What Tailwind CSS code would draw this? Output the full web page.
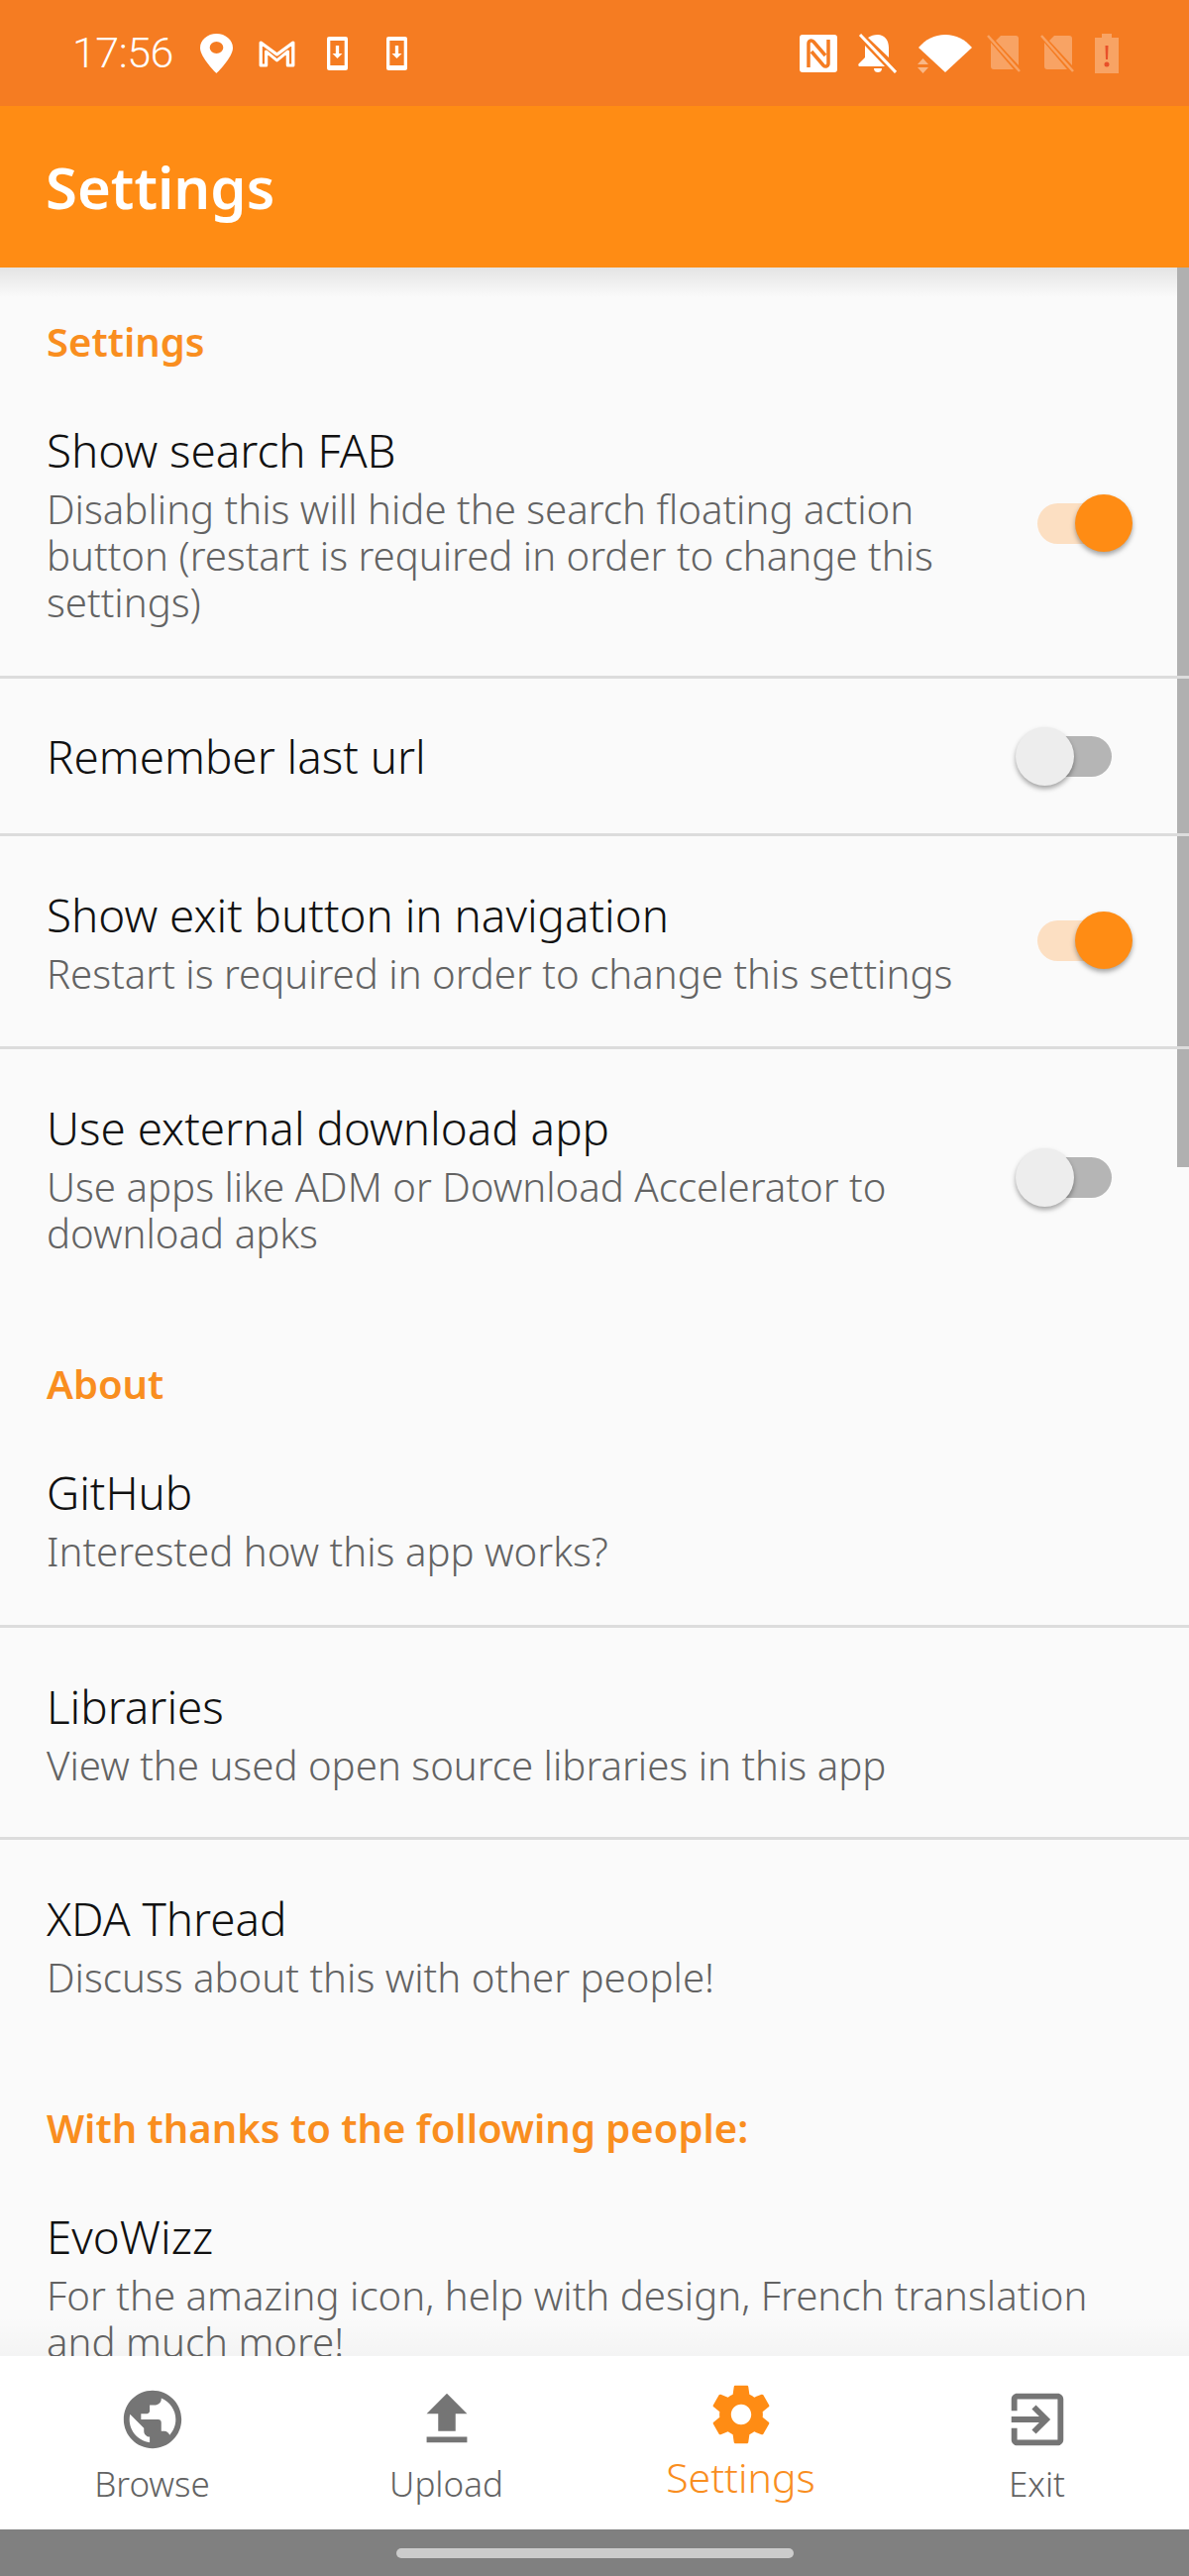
<!DOCTYPE html>
<html lang="en">
<head>
  <meta charset="UTF-8" />
  <meta name="viewport" content="width=device-width, initial-scale=1.0" />
  <title>Settings</title>
  <script src="https://cdn.jsdelivr.net/npm/@tailwindcss/browser@4"></script>
</head>
<body class="bg-[#fafafa] font-['Noto_Sans',sans-serif]">
  <div class="relative w-[1200px] h-[2600px] overflow-hidden flex flex-col">

    <!-- status bar -->
    <div class="h-[107px] shrink-0 bg-[#f57c22] flex items-center text-white pl-[73px] pr-[71px]">
      <span class="text-[43px] font-light leading-none w-[129px] tracking-[-0.5px] font-['Roboto',sans-serif]">17:56</span>
      <svg class="w-[33px] h-[40px]" viewBox="0 0 29 40" preserveAspectRatio="none"><path fill="#fff" fill-rule="evenodd" d="M14.500 0C6.500 0 0 6.300 0 14.200 0 24 14.500 40 14.500 40S29 24 29 14.200C29 6.300 22.500 0 14.500 0zm0 20a6 6 0 1 1 0-12 6 6 0 0 1 0 12z"/></svg>
      <svg class="w-[37px] h-[28px] ml-[26px]" viewBox="0 0 34 28" preserveAspectRatio="none"><path fill="none" stroke="#fff" stroke-width="3" stroke-linejoin="round" d="M2 3l15 12L32 3v23h-5V12L17 21 7 12v14H2z"/></svg>
      <svg class="w-[21px] h-[34px] ml-[32px]" viewBox="0 0 19 34" preserveAspectRatio="none"><path fill="#fff" fill-rule="evenodd" d="M2 0h15a2 2 0 0 1 2 2v30a2 2 0 0 1-2 2H2a2 2 0 0 1-2-2V2a2 2 0 0 1 2-2zm1 4v25h13V4zm5 5h3v8h3l-4.500 5-4.500-5h3z"/></svg>
      <svg class="w-[21px] h-[34px] ml-[39px]" viewBox="0 0 19 34" preserveAspectRatio="none"><path fill="#fff" fill-rule="evenodd" d="M2 0h15a2 2 0 0 1 2 2v30a2 2 0 0 1-2 2H2a2 2 0 0 1-2-2V2a2 2 0 0 1 2-2zm1 4v25h13V4zm5 5h3v8h3l-4.500 5-4.500-5h3z"/></svg>

      <div class="ml-auto flex items-center">
        <svg class="w-[38px] h-[38px]" viewBox="0 0 38 38"><rect width="38" height="38" rx="3" fill="#fff"/><path fill="none" stroke="#f57c22" stroke-width="3.500" d="M9 33V9c0-3 3-4 5-2l12 14M29 5v24c0 3-3 4-5 2L12 17"/></svg>
        <svg class="w-[39px] h-[40px] ml-[21px]" viewBox="0 0 39 40"><path fill="#fff" d="M20 1c6 0 11 5 11 13v10L10 4c3-2 6-3 10-3zM7 12l20 21H1c-1-1-1-2 0-3l6-6zM16 35h8c0 3-2 4-4 4s-4-1-4-4z"/><path stroke="#f57c22" stroke-width="5" d="M0 0l38 38"/><path stroke="#fff" stroke-width="3" d="M2 1l36 38"/></svg>
        <div class="relative w-[54px] h-[38px] ml-[22px]">
          <svg class="absolute inset-0 w-[54px] h-[38px]" viewBox="0 0 54 38"><path fill="#fff" d="M0 13C7 5 16 0 27 0s20 5 27 13L27 38z"/></svg>
          <svg class="absolute left-[-1px] top-[24px] w-[11px] h-[15px]" viewBox="0 0 11 15"><path fill="#fff" fill-opacity=".45" d="M5.500 0L11 6H0zM0 9h11l-5.500 6z"/></svg>
        </div>
        <svg class="w-[34px] h-[38px] ml-[15px]" viewBox="0 0 34 38"><path fill="#fff" fill-opacity=".3" d="M14 1h15a3 3 0 0 1 3 3v27L9 6zM4 8l23 27H7a3 3 0 0 1-3-3z"/><path stroke="#fff" stroke-opacity=".3" stroke-width="2.500" d="M1 1l32 36"/></svg>
        <svg class="w-[34px] h-[38px] ml-[20px]" viewBox="0 0 34 38"><path fill="#fff" fill-opacity=".3" d="M14 1h15a3 3 0 0 1 3 3v27L9 6zM4 8l23 27H7a3 3 0 0 1-3-3z"/><path stroke="#fff" stroke-opacity=".3" stroke-width="2.500" d="M1 1l32 36"/></svg>
        <svg class="w-[24px] h-[40px] ml-[21px]" viewBox="0 0 24 40"><path fill="#fff" fill-opacity=".3" d="M7 0h10v4h7v36H0V4h7z"/><path fill="#e8502a" d="M10.500 12h3l-.5 14h-2zM12 28.500a2.500 2.500 0 1 1 0 5 2.500 2.500 0 0 1 0-5z"/></svg>
      </div>
    </div>

    <!-- app bar -->
    <div class="h-[163px] shrink-0 bg-[#ff8c14] flex items-center pl-[46px] relative z-10">
      <h1 class="text-[58px] font-semibold text-white leading-none">Settings</h1>
    </div>

    <!-- list -->
    <div class="relative flex-1 overflow-hidden">
      <div class="absolute top-0 inset-x-0 h-[30px] bg-gradient-to-b from-[#e4e4e4] to-[#fafafa]/0"></div>
      <div class="absolute bottom-0 inset-x-0 h-[40px] bg-gradient-to-t from-black/[0.025] to-transparent"></div>
      <div class="absolute top-0 right-0 w-[12px] h-[908px] bg-[#b0b0b0]"></div>

      <p class="pt-[55px] h-[126px] pl-[47px] text-[40px] font-semibold text-[#f98e1f] leading-[40px]">Settings</p>

      <div class="h-[289px] relative pl-[47px] pt-[28px] border-b-[3px] border-[#dcdcdc]">
        <p class="text-[45.8px] font-light leading-[60px] text-[#111111]">Show search FAB</p>
        <p class="text-[40.2px] font-light leading-[47px] mt-[6px] text-[#636363] w-[920px]">Disabling this will hide the search floating action button (restart is required in order to change this settings)</p>
        <div class="absolute left-[1022px] top-[102px] w-[122px] h-[60px] flex items-center">
          <div class="absolute left-[25px] w-[75px] h-[41px] rounded-full bg-[#fcdfc2]"></div>
          <div class="absolute left-[63px] w-[58px] h-[58px] rounded-full bg-[#ff8c14] shadow-[0_3px_5px_rgba(0,0,0,0.35)]"></div>
        </div>
      </div>

      <div class="h-[159px] relative pl-[47px] flex items-center border-b-[3px] border-[#dcdcdc]">
        <p class="text-[45.8px] font-light leading-[60px] text-[#111111]">Remember last url</p>
        <div class="absolute left-[1022px] top-[48px] w-[122px] h-[60px] flex items-center">
          <div class="absolute left-[25px] w-[75px] h-[41px] rounded-full bg-[#b5b5b5]"></div>
          <div class="absolute left-[3px] w-[59px] h-[59px] rounded-full bg-[#ededed] shadow-[0_3px_5px_rgba(0,0,0,0.35)]"></div>
        </div>
      </div>

      <div class="h-[215px] relative pl-[47px] pt-[49px] border-b-[3px] border-[#dcdcdc]">
        <p class="text-[45.8px] font-light leading-[60px] text-[#111111]">Show exit button in navigation</p>
        <p class="text-[40.2px] font-light leading-[47px] mt-[6px] text-[#636363]">Restart is required in order to change this settings</p>
        <div class="absolute left-[1022px] top-[75px] w-[122px] h-[60px] flex items-center">
          <div class="absolute left-[25px] w-[75px] h-[41px] rounded-full bg-[#fcdfc2]"></div>
          <div class="absolute left-[63px] w-[58px] h-[58px] rounded-full bg-[#ff8c14] shadow-[0_3px_5px_rgba(0,0,0,0.35)]"></div>
        </div>
      </div>

      <div class="h-[263px] relative pl-[47px] pt-[49px]">
        <p class="text-[45.8px] font-light leading-[60px] text-[#111111]">Use external download app</p>
        <p class="text-[40.2px] font-light leading-[47px] mt-[6px] text-[#636363] w-[920px]">Use apps like ADM or Download Accelerator to download apks</p>
        <div class="absolute left-[1022px] top-[99px] w-[122px] h-[60px] flex items-center">
          <div class="absolute left-[25px] w-[75px] h-[41px] rounded-full bg-[#b5b5b5]"></div>
          <div class="absolute left-[3px] w-[59px] h-[59px] rounded-full bg-[#ededed] shadow-[0_3px_5px_rgba(0,0,0,0.35)]"></div>
        </div>
      </div>

      <p class="pt-[55px] h-[126px] pl-[47px] text-[40px] font-semibold text-[#f98e1f] leading-[40px]">About</p>

      <div class="h-[195px] pl-[47px] pt-[28px] border-b-[3px] border-[#dcdcdc]">
        <p class="text-[45.8px] font-light leading-[60px] text-[#111111]">GitHub</p>
        <p class="text-[40.2px] font-light leading-[47px] mt-[6px] text-[#636363]">Interested how this app works?</p>
      </div>
      <div class="h-[214px] pl-[47px] pt-[49px] border-b-[3px] border-[#dcdcdc]">
        <p class="text-[45.8px] font-light leading-[60px] text-[#111111]">Libraries</p>
        <p class="text-[40.2px] font-light leading-[47px] mt-[6px] text-[#636363]">View the used open source libraries in this app</p>
      </div>
      <div class="h-[216px] pl-[47px] pt-[49px]">
        <p class="text-[45.8px] font-light leading-[60px] text-[#111111]">XDA Thread</p>
        <p class="text-[40.2px] font-light leading-[47px] mt-[6px] text-[#636363]">Discuss about this with other people!</p>
      </div>

      <p class="pt-[55px] h-[126px] pl-[47px] text-[40px] font-semibold text-[#f98e1f] leading-[40px]">With thanks to the following people:</p>

      <div class="pl-[47px] pt-[28px]">
        <p class="text-[45.8px] font-light leading-[60px] text-[#111111]">EvoWizz</p>
        <p class="text-[40.2px] font-light leading-[47px] mt-[6px] text-[#636363] w-[1120px]">For the amazing icon, help with design, French translation and much more!</p>
      </div>
    </div>

    <!-- bottom navigation -->
    <div class="h-[175px] shrink-0 bg-white flex px-[5px]">
      <div class="flex-1 flex flex-col items-center pt-[29px]">
        <svg class="w-[70px] h-[70px]" viewBox="0 0 24 24"><path fill="#757575" d="M12 2C6.480 2 2 6.480 2 12s4.480 10 10 10 10-4.480 10-10S17.520 2 12 2zm-1 17.930c-3.950-.49-7-3.850-7-7.930 0-.62.08-1.210.21-1.790L9 15v1c0 1.100.9 2 2 2v1.930zm6.900-2.540c-.26-.81-1-1.390-1.900-1.390h-1v-3c0-.55-.45-1-1-1H8v-2h2c.55 0 1-.45 1-1V7h2c1.100 0 2-.9 2-2v-.41c2.930 1.190 5 4.060 5 7.410 0 2.080-.8 3.970-2.100 5.390z"/></svg>
        <span class="text-[35px] font-light leading-[44px] mt-[8px] text-[#636363]">Browse</span>
      </div>
      <div class="flex-1 flex flex-col items-center pt-[29px]">
        <svg class="w-[70px] h-[70px]" viewBox="0 0 24 24"><path fill="#757575" d="M9 16h6v-6h4l-7-7-7 7h4zm-4 2h14v2H5z"/></svg>
        <span class="text-[35px] font-light leading-[44px] mt-[8px] text-[#636363]">Upload</span>
      </div>
      <div class="flex-1 flex flex-col items-center pt-[24px]">
        <svg class="w-[70px] h-[70px]" viewBox="0 0 24 24"><path fill="#ff8c14" d="M19.430 12.980c.04-.32.07-.64.07-.98s-.03-.66-.07-.98l2.110-1.650c.19-.15.24-.42.12-.64l-2-3.460c-.12-.22-.39-.3-.61-.22l-2.490 1c-.52-.4-1.080-.73-1.690-.98l-.38-2.650C14.460 2.180 14.250 2 14 2h-4c-.25 0-.46.18-.49.42l-.38 2.650c-.61.25-1.170.59-1.690.98l-2.490-1c-.23-.09-.49 0-.61.22l-2 3.460c-.13.22-.07.49.12.64l2.110 1.650c-.04.32-.07.65-.07.98s.03.66.07.98l-2.110 1.650c-.19.15-.24.42-.12.64l2 3.460c.12.22.39.3.61.22l2.490-1c.52.4 1.080.73 1.690.98l.38 2.650c.03.24.24.42.49.42h4c.25 0 .46-.18.49-.42l.38-2.650c.61-.25 1.170-.59 1.690-.98l2.490 1c.23.09.49 0 .61-.22l2-3.460c.12-.22.07-.49-.12-.64l-2.110-1.650zM12 15.500c-1.930 0-3.500-1.570-3.500-3.500s1.570-3.500 3.500-3.500 3.500 1.570 3.500 3.500-1.570 3.500-3.500 3.500z"/></svg>
        <span class="text-[41px] font-light leading-[48px] mt-[4px] text-[#f98e1f]">Settings</span>
      </div>
      <div class="flex-1 flex flex-col items-center pt-[29px] pl-[2px]">
        <svg class="w-[70px] h-[70px]" viewBox="0 0 24 24"><path fill="#757575" d="M10.090 15.590L11.500 17l5-5-5-5-1.410 1.410L12.670 11H3v2h9.670l-2.580 2.590zM19 3H5c-1.110 0-2 .9-2 2v4h2V5h14v14H5v-4H3v4c0 1.100.89 2 2 2h14c1.100 0 2-.9 2-2V5c0-1.100-.9-2-2-2z"/></svg>
        <span class="text-[35px] font-light leading-[44px] mt-[8px] text-[#636363]">Exit</span>
      </div>
    </div>

    <!-- system nav -->
    <div class="h-[47px] shrink-0 bg-[#808080] flex justify-center pt-[19px]">
      <div class="w-[401px] h-[10px] rounded-full bg-[#cccccc]"></div>
    </div>
  </div>
</body>
</html>
